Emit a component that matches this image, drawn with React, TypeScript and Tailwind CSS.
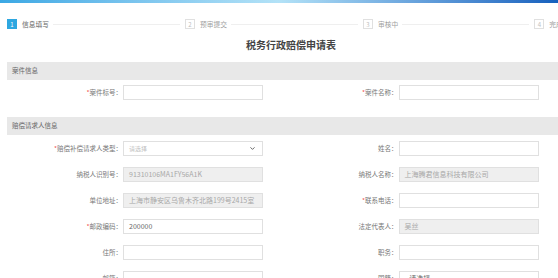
import { ChevronDown } from 'lucide-react';

const font = { fontFamily: '"Noto Sans CJK SC", "Noto Sans", sans-serif' };

type Field = {
  label: string;
  required?: boolean;
  value?: string;
  placeholder?: string;
  disabled?: boolean;
  select?: boolean;
};

const rows: [Field, Field][] = [
  [
    { label: '赔偿补偿请求人类型', required: true, placeholder: '请选择', select: true },
    { label: '姓名' },
  ],
  [
    { label: '纳税人识别号', value: '91310106MA1FY56A1K', disabled: true },
    { label: '纳税人名称', value: '上海腾君信息科技有限公司', disabled: true },
  ],
  [
    { label: '单位地址', value: '上海市静安区乌鲁木齐北路199号2415室', disabled: true },
    { label: '联系电话', required: true },
  ],
  [
    { label: '邮政编码', required: true, value: '200000' },
    { label: '法定代表人', value: '吴丝', disabled: true },
  ],
  [{ label: '住所' }, { label: '职务' }],
  [{ label: '邮箱' }, { label: '国籍', value: '--请选择--', select: true }],
];

function FormField({ f }: { f: Field }) {
  return (
    <div className="flex items-center w-[280px]">
      <div className="w-[116px] text-right text-[6.5px] text-[#777] pr-[1px] whitespace-nowrap">
        {f.required && <span className="text-[#f05050]">*</span>}
        {f.label}：
      </div>
      <div
        className={`w-[140px] h-[15px] border border-[#e0e0e0] flex items-center px-[5px] text-[7px] ${
          f.disabled ? 'bg-[#efefef] text-[#a8a8a8]' : 'bg-white text-[#666]'
        }`}
      >
        <span className={`flex-1 whitespace-nowrap ${f.placeholder ? 'text-[#c0c0c0] text-[6px]' : ''}`}>
          {f.value ?? f.placeholder ?? ''}
        </span>
        {f.select && f.placeholder && <ChevronDown className="w-[7px] h-[7px] text-[#555] mr-[1px]" strokeWidth={3} />}
      </div>
    </div>
  );
}

function Band({ title }: { title: string }) {
  return (
    <div className="h-[18px] bg-[#e8e8e8] flex items-center pl-[5px] text-[6.5px] text-[#666]">{title}</div>
  );
}

const steps = ['信息填写', '预审提交', '审核中', '完成'];

export default function App() {
  return (
    <div className="w-[558px] h-[278px] overflow-hidden bg-white" style={font}>
      <div className="h-[3px] bg-gradient-to-r from-[#3aa8e4] via-[#b3e2f7] to-[#1560bd]" />

      <div className="flex items-center pl-[7px] mt-[16px] h-[10px] whitespace-nowrap">
        {steps.map((s, i) => (
          <div key={s} className="flex items-center shrink-0">
            <div
              className={`w-[10px] h-[10px] flex items-center justify-center text-[6px] ${
                i === 0 ? 'bg-[#2ea7e0] text-white' : 'border border-[#e0e0e0] text-[#c0c0c0]'
              }`}
            >
              {i + 1}
            </div>
            <span className={`ml-[5px] text-[6.75px] ${i === 0 ? 'text-[#666]' : 'text-[#a0a0a0]'}`}>{s}</span>
            {i < 3 && <div className="w-[127px] h-px bg-[#efefef] ml-[4px] mr-[5px]" />}
          </div>
        ))}
      </div>

      <h1 className="mt-[9px] text-center text-[10px] leading-[14px] font-bold text-[#444] pl-[24px]">
        税务行政赔偿申请表
      </h1>

      <div className="pl-[7px] mt-[10px]">
        <Band title="案件信息" />
        <div className="flex mt-[5px]">
          <FormField f={{ label: '案件标号', required: true }} />
          <FormField f={{ label: '案件名称', required: true }} />
        </div>

        <div className="mt-[17px]">
          <Band title="赔偿请求人信息" />
        </div>
        <div className="flex flex-col gap-[11px] mt-[6px]">
          {rows.map((r, i) => (
            <div key={i} className="flex">
              <FormField f={r[0]} />
              <FormField f={r[1]} />
            </div>
          ))}
        </div>
      </div>
    </div>
  );
}
